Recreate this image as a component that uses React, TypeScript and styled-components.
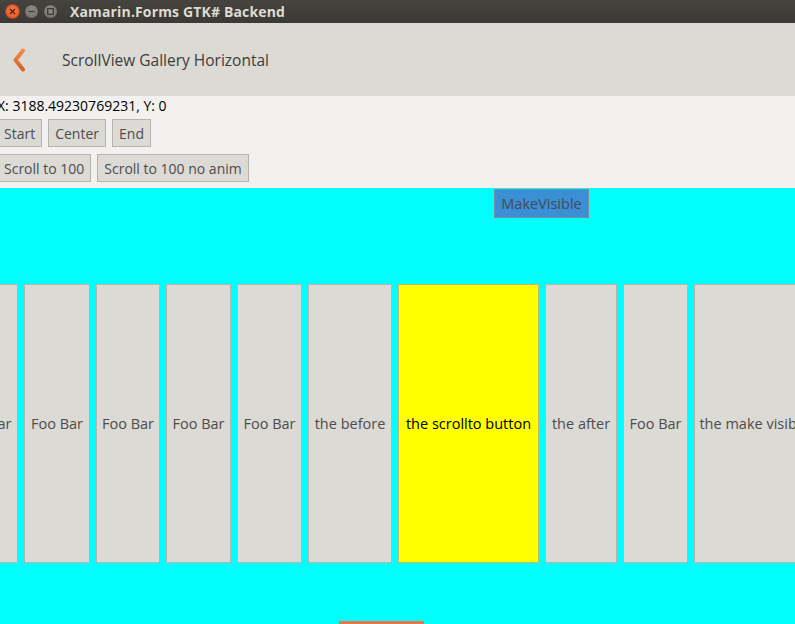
import React from "react";
import styled, { createGlobalStyle } from "styled-components";

const Global = createGlobalStyle`
  html, body { margin: 0; padding: 0; }
  body {
    width: 795px;
    height: 624px;
    overflow: hidden;
    background: #00ffff;
    font-family: "Open Sans", "DejaVu Sans", sans-serif;
  }
`;

const Window = styled.div`
  display: flex;
  flex-direction: column;
  width: 795px;
  height: 624px;
  overflow: hidden;
`;

const TitleBar = styled.div`
  height: 23px;
  flex: none;
  display: flex;
  align-items: center;
  gap: 4px;
  padding-left: 5px;
  background: linear-gradient(#45443f, #3a3935);
  color: #dfdbd2;
  font-family: "Open Sans", sans-serif;
  font-weight: 700;
  font-size: 14px;
`;

const WinButton = styled.span<{ $close?: boolean }>`
  width: 15px;
  height: 15px;
  border-radius: 50%;
  box-sizing: border-box;
  border: 1px solid ${(p) => (p.$close ? "#b9431f" : "#3a3935")};
  background: ${(p) =>
    p.$close
      ? "radial-gradient(circle at 50% 40%, #f27a4c, #e05424)"
      : "radial-gradient(circle at 50% 40%, #8e8c86, #6c6a65)"};
  display: flex;
  align-items: center;
  justify-content: center;
  color: #3a3935;
  flex: none;
`;

const WinTitle = styled.span`
  margin-left: 8px;
  letter-spacing: 0.15px;
`;

const NavBar = styled.div`
  height: 73px;
  flex: none;
  display: flex;
  align-items: center;
  background: #dcdad5;
`;

const BackButton = styled.div`
  width: 62px;
  display: flex;
  align-items: center;
  padding-left: 12px;
  box-sizing: border-box;
`;

const NavTitle = styled.div`
  font-size: 15.5px;
  color: #3c3c3c;
  margin-top: 1px;
`;

const Info = styled.div`
  height: 92px;
  flex: none;
  background: #f2f1f0;
  display: flex;
  flex-direction: column;
  margin-left: -3px;
  box-sizing: border-box;
`;

const PosLabel = styled.div`
  font-size: 14px;
  line-height: 19px;
  color: #000;
  height: 19px;
  margin-bottom: 4px;
`;

const ButtonRow = styled.div`
  display: flex;
  gap: 6px;
  margin-bottom: 7px;
`;

const Btn = styled.div`
  height: 28px;
  box-sizing: border-box;
  padding: 0 6px;
  border: 1px solid #b8b4ac;
  background: #dcdad5;
  color: #4c4c4c;
  font-size: 14px;
  display: flex;
  align-items: center;
`;

const Scroller = styled.div`
  flex: 1;
  background: #00ffff;
  display: flex;
  flex-direction: column;
  overflow: hidden;
`;

const TopRow = styled.div`
  display: flex;
  padding-top: 1px;
  padding-left: 494px;
`;

const MakeVisible = styled.div`
  width: 95px;
  height: 29px;
  box-sizing: border-box;
  border: 1px solid #7a8ea0;
  background: #3a8fd5;
  color: #444b55;
  font-size: 14.5px;
  display: flex;
  align-items: center;
  justify-content: center;
`;

const Track = styled.div`
  display: flex;
  gap: 6px;
  margin-top: 66px;
  margin-left: -47px;
  height: 279px;
  flex: none;
`;

const Card = styled.div<{ $w: number; $hl?: boolean }>`
  width: ${(p) => p.$w}px;
  flex: none;
  box-sizing: border-box;
  border: 1px solid ${(p) => (p.$hl ? "#c4b86a" : "#bcb2aa")};
  background: ${(p) => (p.$hl ? "#ffff00" : "#dcdad5")};
  color: ${(p) => (p.$hl ? "#000" : "#4c4c4c")};
  font-size: 14.5px;
  display: flex;
  align-items: center;
  justify-content: center;
  white-space: nowrap;
  overflow: hidden;
  padding: 0 5px;
`;

const BottomRow = styled.div`
  margin-top: auto;
  display: flex;
  padding-left: 339px;
`;

const OrangeButton = styled.div`
  width: 85px;
  height: 3px;
  background: #e8784a;
`;

const cards: { label: string; w: number; hl?: boolean }[] = [
  { label: "Foo Bar", w: 65 },
  { label: "Foo Bar", w: 66 },
  { label: "Foo Bar", w: 64 },
  { label: "Foo Bar", w: 65 },
  { label: "Foo Bar", w: 65 },
  { label: "the before", w: 84 },
  { label: "the scrollto button", w: 141, hl: true },
  { label: "the after", w: 72 },
  { label: "Foo Bar", w: 65 },
  { label: "the make visible", w: 120 },
];

export default function App() {
  return (
    <Window>
      <Global />
      <TitleBar>
        <WinButton $close>
          <svg width="7" height="7" viewBox="0 0 7 7">
            <path d="M1 1L6 6M6 1L1 6" stroke="#5a1d08" strokeWidth="1.3" />
          </svg>
        </WinButton>
        <WinButton>
          <svg width="7" height="7" viewBox="0 0 7 7">
            <path d="M0.5 3.5H6.5" stroke="#3a3935" strokeWidth="1.3" />
          </svg>
        </WinButton>
        <WinButton>
          <svg width="7" height="7" viewBox="0 0 7 7">
            <rect x="0.7" y="0.7" width="5.6" height="5.6" fill="none" stroke="#3a3935" strokeWidth="1.2" />
          </svg>
        </WinButton>
        <WinTitle>Xamarin.Forms GTK# Backend</WinTitle>
      </TitleBar>
      <NavBar>
        <BackButton>
          <svg width="15" height="24" viewBox="0 0 15 24">
            <defs>
              <linearGradient id="bk" x1="0" y1="0" x2="0" y2="1">
                <stop offset="0" stopColor="#f08a4c" />
                <stop offset="1" stopColor="#d9602a" />
              </linearGradient>
            </defs>
            <path
              d="M11 2.5L3.5 12L11 21.5"
              fill="none"
              stroke="url(#bk)"
              strokeWidth="4"
              strokeLinecap="round"
              strokeLinejoin="round"
            />
          </svg>
        </BackButton>
        <NavTitle>ScrollView Gallery Horizontal</NavTitle>
      </NavBar>
      <Info>
        <PosLabel>X: 3188.49230769231, Y: 0</PosLabel>
        <ButtonRow>
          <Btn>Start</Btn>
          <Btn>Center</Btn>
          <Btn>End</Btn>
        </ButtonRow>
        <ButtonRow>
          <Btn>Scroll to 100</Btn>
          <Btn>Scroll to 100 no anim</Btn>
        </ButtonRow>
      </Info>
      <Scroller>
        <TopRow>
          <MakeVisible>MakeVisible</MakeVisible>
        </TopRow>
        <Track>
          {cards.map((c, i) => (
            <Card key={i} $w={c.w} $hl={c.hl}>
              {c.label}
            </Card>
          ))}
        </Track>
        <BottomRow>
          <OrangeButton />
        </BottomRow>
      </Scroller>
    </Window>
  );
}
